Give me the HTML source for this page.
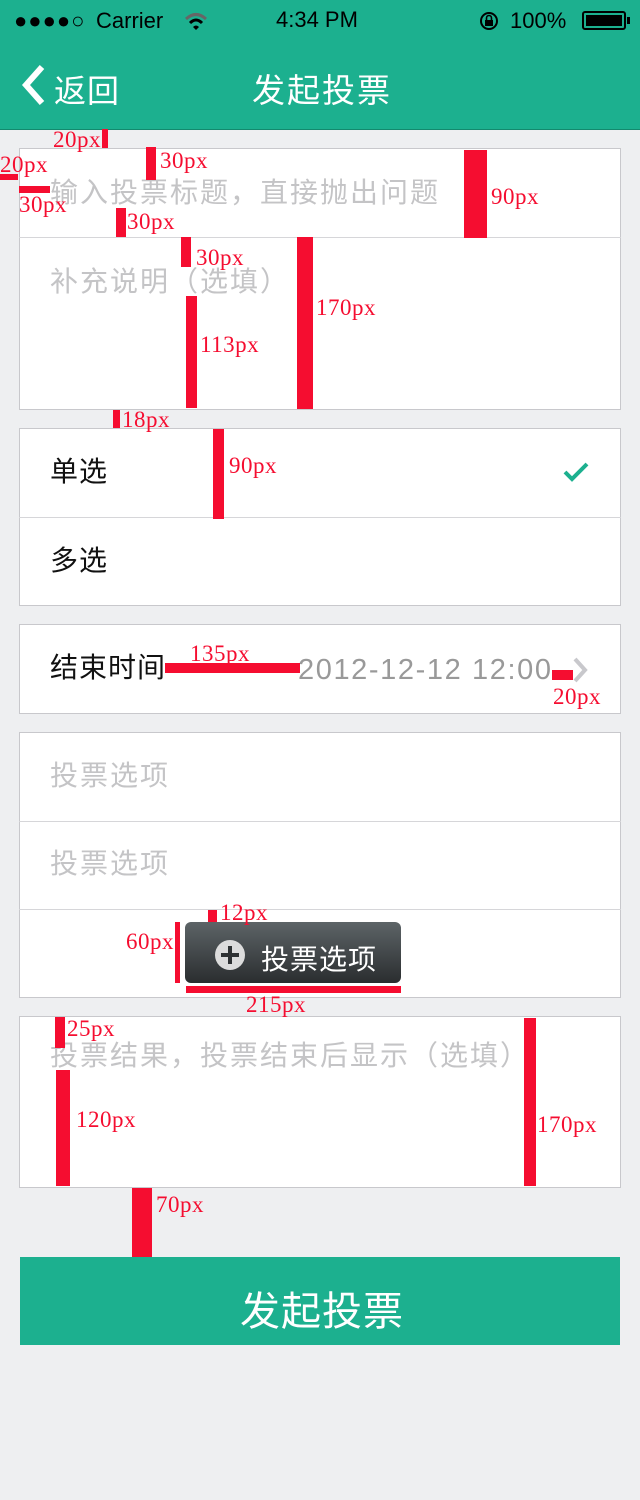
<!DOCTYPE html>
<html><head><meta charset="utf-8"><style>
*{margin:0;padding:0;box-sizing:border-box}
body{width:640px;height:1500px;background:#eeeff1;position:relative;overflow:hidden;font-family:"Liberation Sans","Noto Sans CJK SC",sans-serif}
.a{position:absolute}
.hdr{left:0;top:0;width:640px;height:130px;background:#1cb08f;border-bottom:1px solid #13896e}
.card{position:absolute;left:19px;width:602px;background:#fff;border:1px solid #c8c8cc}
.div{position:absolute;left:19px;width:602px;height:1px;background:#d6d6d9}
.ph{position:absolute;color:#c4c4c6;font-size:28px;white-space:nowrap;line-height:1;letter-spacing:2px}
.bk{position:absolute;color:#111;font-size:28px;line-height:1;letter-spacing:1px}
.r{position:absolute;background:#f50d30}
.l{position:absolute;color:#f50d30;font-family:"Liberation Serif",serif;font-size:23px;line-height:1;white-space:nowrap;letter-spacing:0.5px}
</style></head><body>
<div class="a hdr"></div>
<div class="a" style="left:14px;top:8px;font-size:22px;color:#000;letter-spacing:1px">●●●●○</div>
<div class="a" style="left:96px;top:8px;font-size:22px;color:#000">Carrier</div>
<svg class="a" style="left:184px;top:12px" width="24" height="18" viewBox="0 0 24 18"><path d="M2 7 Q12 -2 22 7" stroke="#666" stroke-width="3" fill="none"/><path d="M6 11 Q12 5 18 11" stroke="#000" stroke-width="3" fill="none"/><path d="M9 15 L12 18 L15 15 Q12 12 9 15Z" fill="#000"/></svg>
<div class="a" style="left:276px;top:7px;font-size:22px;color:#000">4:34 PM</div>
<svg class="a" style="left:478px;top:10px" width="22" height="22" viewBox="0 0 22 22"><circle cx="11" cy="11" r="8" stroke="#000" stroke-width="2" fill="none"/><rect x="7" y="10" width="8" height="6" fill="#000"/><path d="M8.5 10 V8 A2.5 2.5 0 0 1 13.5 8 V10" stroke="#000" stroke-width="1.6" fill="none"/></svg>
<div class="a" style="left:510px;top:8px;font-size:22px;color:#000">100%</div>
<div class="a" style="left:582px;top:11px;width:44px;height:19px;border:2px solid #000;border-radius:3px;padding:2px"><div style="width:100%;height:100%;background:#000"></div></div>
<div class="a" style="left:627px;top:17px;width:3px;height:7px;background:#000"></div>
<svg class="a" style="left:18px;top:64px" width="30" height="42" viewBox="0 0 30 42"><path d="M24 3 L8 21 L24 39" stroke="#fff" stroke-width="6" fill="none"/></svg>
<div class="a" style="left:54px;top:66px;font-size:32px;color:#fff;letter-spacing:1px">返回</div>
<div class="a" style="left:252px;top:64px;font-size:33px;color:#fff;letter-spacing:2px">发起投票</div>

<div class="card" style="top:148px;height:262px"></div>
<div class="div" style="top:237px"></div>
<div class="ph" style="left:50px;top:179px">输入投票标题，直接抛出问题</div>
<div class="ph" style="left:50px;top:268px">补充说明（选填）</div>

<div class="card" style="top:428px;height:178px"></div>
<div class="div" style="top:517px"></div>
<div class="bk" style="left:50px;top:458px">单选</div>
<div class="bk" style="left:50px;top:547px">多选</div>
<svg class="a" style="left:562px;top:460px" width="28" height="24" viewBox="0 0 28 24"><path d="M3 12 L10 19 L25 4" stroke="#1cb08f" stroke-width="4" fill="none"/></svg>

<div class="card" style="top:624px;height:90px"></div>
<div class="bk" style="left:50px;top:654px">结束时间</div>
<div class="a" style="left:298px;top:654px;font-size:29px;color:#999;white-space:nowrap;letter-spacing:1.6px">2012-12-12 12:00</div>
<svg class="a" style="left:570px;top:656px" width="20" height="28" viewBox="0 0 20 28"><path d="M5 3 L15 14 L5 25" stroke="#c8c8cc" stroke-width="4" fill="none"/></svg>

<div class="card" style="top:732px;height:266px"></div>
<div class="div" style="top:821px"></div>
<div class="div" style="top:909px"></div>
<div class="ph" style="left:50px;top:762px">投票选项</div>
<div class="ph" style="left:50px;top:850px">投票选项</div>
<div class="a" style="left:185px;top:922px;width:216px;height:61px;border-radius:6px;background:linear-gradient(#5d6467,#2a2d2f)"></div>
<div class="a" style="left:215px;top:940px;width:30px;height:30px;border-radius:50%;background:#dcdcdc"></div>
<div class="a" style="left:221px;top:953px;width:18px;height:4px;background:#2e3133"></div>
<div class="a" style="left:228px;top:946px;width:4px;height:18px;background:#2e3133"></div>
<div class="a" style="left:261px;top:938px;font-size:28px;color:#fff;letter-spacing:1px">投票选项</div>

<div class="card" style="top:1016px;height:172px"></div>
<div class="ph" style="left:50px;top:1042px">投票结果，投票结束后显示（选填）</div>

<div class="a" style="left:20px;top:1257px;width:600px;height:88px;background:#1cb08f"></div>
<div class="a" style="left:240px;top:1279px;font-size:40px;color:#fff;letter-spacing:1px">发起投票</div>

<div class="r" style="left:102px;top:129px;width:6px;height:19px"></div><div class="l" style="left:53px;top:128px">20px</div>
<div class="r" style="left:0;top:174px;width:18px;height:6px"></div><div class="l" style="left:0;top:153px">20px</div>
<div class="r" style="left:19px;top:186px;width:31px;height:7px"></div><div class="l" style="left:19px;top:193px">30px</div>
<div class="r" style="left:146px;top:147px;width:10px;height:33px"></div><div class="l" style="left:160px;top:149px">30px</div>
<div class="r" style="left:116px;top:208px;width:10px;height:29px"></div><div class="l" style="left:127px;top:210px">30px</div>
<div class="r" style="left:464px;top:150px;width:23px;height:88px"></div><div class="l" style="left:491px;top:185px">90px</div>
<div class="r" style="left:181px;top:237px;width:10px;height:30px"></div><div class="l" style="left:196px;top:246px">30px</div>
<div class="r" style="left:186px;top:296px;width:11px;height:112px"></div><div class="l" style="left:200px;top:333px">113px</div>
<div class="r" style="left:297px;top:237px;width:16px;height:172px"></div><div class="l" style="left:316px;top:296px">170px</div>
<div class="r" style="left:113px;top:410px;width:7px;height:18px"></div><div class="l" style="left:122px;top:408px">18px</div>
<div class="r" style="left:213px;top:429px;width:11px;height:90px"></div><div class="l" style="left:229px;top:454px">90px</div>
<div class="r" style="left:165px;top:663px;width:135px;height:10px"></div><div class="l" style="left:190px;top:642px">135px</div>
<div class="r" style="left:552px;top:670px;width:21px;height:10px"></div><div class="l" style="left:553px;top:685px">20px</div>
<div class="r" style="left:208px;top:910px;width:9px;height:12px"></div><div class="l" style="left:220px;top:901px">12px</div>
<div class="r" style="left:175px;top:922px;width:5px;height:61px"></div><div class="l" style="left:126px;top:930px">60px</div>
<div class="r" style="left:186px;top:986px;width:215px;height:7px"></div><div class="l" style="left:246px;top:993px">215px</div>
<div class="r" style="left:55px;top:1017px;width:10px;height:31px"></div><div class="l" style="left:67px;top:1017px">25px</div>
<div class="r" style="left:56px;top:1070px;width:14px;height:116px"></div><div class="l" style="left:76px;top:1108px">120px</div>
<div class="r" style="left:524px;top:1018px;width:12px;height:168px"></div><div class="l" style="left:537px;top:1113px">170px</div>
<div class="r" style="left:132px;top:1188px;width:20px;height:69px"></div><div class="l" style="left:156px;top:1193px">70px</div>
</body></html>
